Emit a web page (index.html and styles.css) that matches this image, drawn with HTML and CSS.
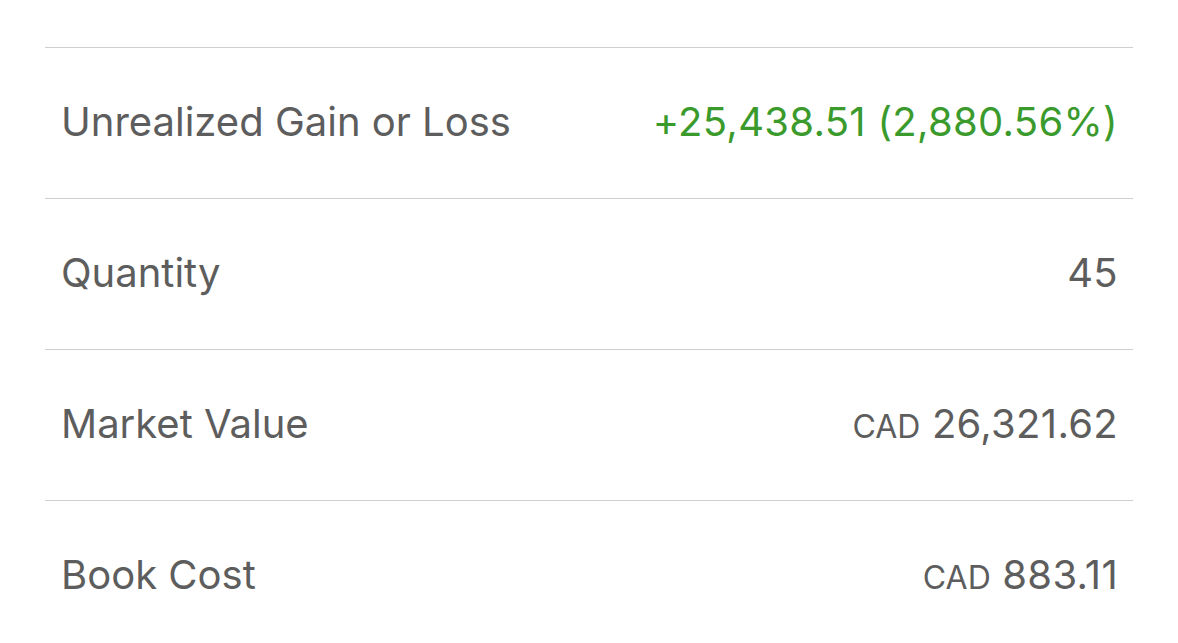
FILE: index.html
```html
<!DOCTYPE html>
<html lang="en">
<head>
  <meta charset="UTF-8" />
  <meta name="viewport" content="width=device-width, initial-scale=1.0" />
  <title>Position Details</title>
  <link rel="stylesheet" href="styles.css">
</head>
<body>
  <section class="details">
    <div class="row">
      <span class="label">Unrealized Gain or Loss</span>
      <span class="value gain">+25,438.51 (2,880.56%)</span>
    </div>
    <div class="row">
      <span class="label">Quantity</span>
      <span class="value">45</span>
    </div>
    <div class="row">
      <span class="label">Market Value</span>
      <span class="value"><span class="currency">CAD</span> 26,321.62</span>
    </div>
    <div class="row">
      <span class="label">Book Cost</span>
      <span class="value"><span class="currency">CAD</span> 883.11</span>
    </div>
  </section>
</body>
</html>
```

FILE: styles.css
```css
:root {
  --text: #5d5d5d;
  --green: #3a9a2c;
  --line: #cfcfcf;
}
*, *::before, *::after { box-sizing: border-box; }
body {
  margin: 0;
  font-family: 'Inter', 'Liberation Sans', sans-serif;
  background: #ffffff;
  color: var(--text);
  overflow: hidden;
}
.details {
  margin: 47px 45px 0 45px;
}
.row {
  display: flex; justify-content: space-between; align-items: center;
  height: 151px;
  padding: 0 15px 4px 16px;
  border-top: 1px solid var(--line);
}
.label, .value {
  font-size: 40px;
  font-weight: 400;
}
.value { letter-spacing: 0.3px; }
.gain { color: var(--green); }
.currency { font-size: 32px; letter-spacing: 0; }
```
